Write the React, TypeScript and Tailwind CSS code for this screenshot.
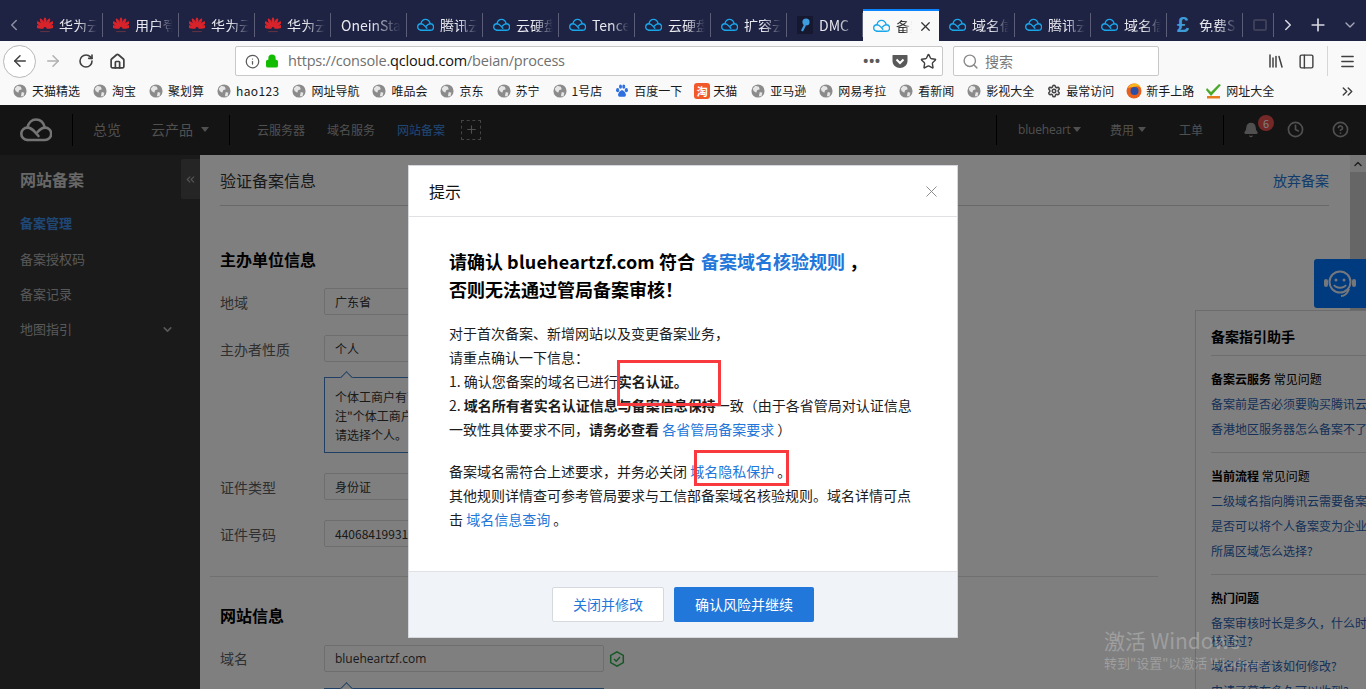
import {
  ArrowLeft, ArrowRight, RotateCw, Home, Info, Lock, Star, Search, Library, PanelLeft, Menu,
  ChevronLeft, ChevronRight, ChevronDown, ChevronUp, ChevronsLeft, ChevronsRight, Plus, X, Bell, Clock, CircleHelp, Settings,
} from "lucide-react";

const font = "font-['Noto_Sans_CJK_SC','Noto_Sans',sans-serif]";

function CloudLogo({ className, color }: { className: string; color: string }) {
  return (
    <svg viewBox="0 0 32 24" className={className} fill="none" stroke={color} strokeWidth="2.6" strokeLinecap="round">
      <path d="M7.5 22H25a6.2 6.2 0 0 0 0-12.4c-3 0-5 1.6-7.4 4.4" />
      <path d="M7.5 22a6.2 6.2 0 0 1 0-12.4c3.4 0 5.4 2 8 5l3 3.4" />
      <path d="M7.5 9.6C8.5 4.5 12 1.5 16 1.5c4.2 0 7.6 3 8.8 8" />
    </svg>
  );
}

function HuaweiLogo() {
  return (
    <svg viewBox="0 0 20 20" className="w-[16px] h-[16px] shrink-0">
      {[-78, -52, -26, 0, 26, 52, 78].map((a) => (
        <ellipse key={a} cx="10" cy="6.5" rx="1.9" ry="6" fill="#d8232a" transform={`rotate(${a} 10 14)`} />
      ))}
      <rect x="4" y="17.5" width="12" height="1.4" fill="#5e3240" />
    </svg>
  );
}

type TabIcon = "huawei" | "cloud" | "dmc" | "pound";

function Tab({ label, icon, active }: { label: string; icon?: TabIcon; active?: boolean }) {
  return (
    <div
      className={`relative w-[76px] h-[32px] shrink-0 flex items-center gap-[6px] pl-[10px] pr-[6px] ${
        active ? "bg-[#f9f9fa] border-t-2 border-[#0a84ff] text-[#333]" : "text-[#e8e8ee]"
      }`}
    >
      {icon === "huawei" && <HuaweiLogo />}
      {icon === "cloud" && <CloudLogo className="w-[17px] h-[14px] shrink-0" color="#19a6ea" />}
      {icon === "dmc" && (
        <div className="w-[16px] h-[18px] shrink-0 bg-[#15182e] flex items-center justify-center">
          <svg viewBox="0 0 12 16" className="w-[12px] h-[16px]" fill="#3d9be0">
            <circle cx="7" cy="5" r="3.6" />
            <path d="M5 7.5l2 1-3 6-2-1z" />
          </svg>
        </div>
      )}
      {icon === "pound" && <span className="w-[16px] shrink-0 text-[22px] leading-none font-bold text-[#3d9bd8] font-['Liberation_Sans']">£</span>}
      <span className="flex-1 overflow-hidden whitespace-nowrap text-[14px] leading-none [mask-image:linear-gradient(to_right,black_50%,transparent_100%)]">
        {label}
      </span>
      {active && <X size={15} strokeWidth={2} className="shrink-0 text-[#333]" />}
      {!active && <span className="absolute right-0 top-[4px] h-[24px] w-px bg-[#5b5e76]" />}
    </div>
  );
}

const tabs: { label: string; icon?: TabIcon; active?: boolean }[] = [
  { label: "华为云", icon: "huawei" },
  { label: "用户登", icon: "huawei" },
  { label: "华为云", icon: "huawei" },
  { label: "华为云", icon: "huawei" },
  { label: "OneinStack" },
  { label: "腾讯云", icon: "cloud" },
  { label: "云硬盘", icon: "cloud" },
  { label: "Tencent", icon: "cloud" },
  { label: "云硬盘", icon: "cloud" },
  { label: "扩容云", icon: "cloud" },
  { label: "DMC", icon: "dmc" },
  { label: "备案", icon: "cloud", active: true },
  { label: "域名信", icon: "cloud" },
  { label: "腾讯云", icon: "cloud" },
  { label: "域名信", icon: "cloud" },
  { label: "免费SSL", icon: "pound" },
];

function Globe() {
  return (
    <svg viewBox="0 0 16 16" className="w-[14px] h-[14px] shrink-0">
      <circle cx="8" cy="8" r="7.5" fill="#8b8b8b" />
      <path d="M5 2l4 1 1 3-3 1-1 3-3-2-1-3zM10 9l3 1-1 4-3 0z" fill="#e6e6e6" />
    </svg>
  );
}

function Bookmark({ label, icon, textClass }: { label: string; icon?: React.ReactNode; textClass?: string }) {
  return (
    <div className="flex items-center gap-[5px] shrink-0">
      {icon ?? <Globe />}
      <span className={`${textClass ?? "text-[12px]"} text-[#1a1a1a] whitespace-nowrap`}>{label}</span>
    </div>
  );
}

function Field({ label, value, mt }: { label: string; value: string; mt: string }) {
  return (
    <div className={`flex items-center h-[27px] ${mt}`}>
      <span className="w-[104px] pt-[1px] text-[14px] text-[#5e5e5e] whitespace-nowrap">{label}</span>
      <div className="w-[280px] h-full bg-white border border-[#dcdcdc] rounded-[2px] pl-[10px] pt-[1px] flex items-center text-[12px] text-[#333]">{value}</div>
    </div>
  );
}

function Arrow() {
  return <span className="absolute left-[17px] -top-[5px] w-[9px] h-[9px] rotate-45 bg-white border-l border-t border-[#3f7fc8]" />;
}

function PanelSection({ title, sub, links, last }: { title: string; sub?: string; links: string[]; last?: boolean }) {
  return (
    <div className={last ? "pt-[14px]" : "pt-[14px] pb-[14px] border-b border-[#dcdcdc]"}>
      <div className="text-[12px] leading-[18px] text-black">
        <b>{title}</b>
        {sub && <span> {sub}</span>}
      </div>
      {links.map((l) => (
        <div key={l} className="mt-[7px] text-[12px] leading-[18px] text-[#2a62b0] whitespace-pre">
          {l}
        </div>
      ))}
    </div>
  );
}

const link = "text-[#2277da]";

export default function App() {
  return (
    <div className={`relative w-[1366px] h-[689px] overflow-hidden flex flex-col bg-white ${font}`}>
      {/* tab strip */}
      <div className="h-[41px] bg-[#1e2243] flex items-end shrink-0">
        <div className="w-[27px] h-[32px] flex items-center justify-center text-[#8d8f9f]">
          <ChevronLeft size={18} />
        </div>
        <div className="flex items-end h-[32px]">
          {tabs.map((t, i) => (
            <Tab key={i} {...t} />
          ))}
        </div>
        <div className="w-[31px] h-[32px] flex items-center pl-[10px] relative">
          <span className="w-[14px] h-[12px] border-2 border-[#3c3f55] rounded-[2px]" />
          <span className="absolute right-0 top-[4px] h-[24px] w-px bg-[#5b5e76]" />
        </div>
        <div className="flex-1 h-[32px] flex items-center text-[#d8d8e0]">
          <ChevronRight size={18} className="ml-[5px]" />
          <Plus size={20} className="ml-[11px]" />
          <ChevronDown size={16} className="ml-[14px] text-[#a8a9b8]" />
        </div>
      </div>

      {/* nav toolbar */}
      <div className="h-[38px] pt-[2px] bg-[#f9f9fa] flex items-center shrink-0 text-[#404040]">
        <div className="ml-[3px] w-[33px] h-[33px] rounded-full bg-white border border-[#b8b8b8] flex items-center justify-center shrink-0">
          <ArrowLeft size={18} />
        </div>
        <ArrowRight size={18} className="ml-[8px] text-[#b0b0b0] shrink-0" />
        <RotateCw size={16} strokeWidth={2.4} className="ml-[16px] shrink-0" />
        <Home size={17} strokeWidth={2.4} className="ml-[15px] shrink-0" />
        <div className="ml-[109px] w-[708px] h-[30px] bg-white border border-[#c8c8c8] rounded-[2px] flex items-center shrink-0">
          <Info size={15} className="ml-[9px] text-[#5a5a5a] shrink-0" />
          <Lock size={14} strokeWidth={2.5} fill="#12bc00" className="ml-[5px] text-[#12bc00] shrink-0" />
          <span className="ml-[9px] text-[14.5px] tracking-[-0.2px] text-[#707070] whitespace-nowrap font-['Open_Sans',sans-serif]">
            https://console.<span className="text-[#111]">qcloud.com</span>/beian/process
          </span>
          <span className="ml-auto text-[#5a5a5a] text-[14px] font-bold tracking-[1px] leading-none font-['Liberation_Sans']">•••</span>
          <svg viewBox="0 0 16 16" className="w-[16px] h-[16px] ml-[11px] shrink-0">
            <path d="M1 2h14a.5.5 0 0 1 .5.5V8c0 4-3.5 7-7.5 7S.5 12 .5 8V2.500A.5.5 0 0 1 1 2z" fill="#595959" />
            <path d="M4.500 6.500L8 10l3.500-3.500" stroke="#fff" strokeWidth="2" fill="none" />
          </svg>
          <Star size={17} strokeWidth={2} className="ml-[12px] mr-[5px] text-[#404040] shrink-0" />
        </div>
        <div className="ml-[10px] w-[206px] h-[30px] bg-white border border-[#c8c8c8] rounded-[2px] flex items-center shrink-0">
          <Search size={17} className="ml-[8px] text-[#8a8a8a]" />
          <span className="ml-[6px] text-[14px] text-[#777]">搜索</span>
        </div>
        <Library size={18} className="ml-[108px] shrink-0" />
        <PanelLeft size={17} className="ml-[13px] shrink-0" />
        <span className="ml-[12px] w-px h-[30px] bg-[#d6d6d6] shrink-0" />
        <Menu size={17} className="ml-[11px] shrink-0" />
      </div>

      {/* bookmarks */}
      <div className="h-[26px] pb-[2px] bg-[#f9f9fa] flex items-center pl-[13px] gap-[13px] shrink-0 relative">
        <Bookmark label="天猫精选" />
        <Bookmark label="淘宝" />
        <Bookmark label="聚划算" />
        <Bookmark label="hao123" textClass="text-[12px] tracking-[0.35px]" />
        <Bookmark label="网址导航" />
        <Bookmark label="唯品会" />
        <Bookmark label="京东" />
        <Bookmark label="苏宁" />
        <Bookmark label="1号店" />
        <Bookmark
          label="百度一下"
          icon={
            <svg viewBox="0 0 16 16" className="w-[14px] h-[14px] shrink-0" fill="#2f6fe0">
              <ellipse cx="3" cy="7" rx="1.800" ry="2.300" />
              <ellipse cx="6.300" cy="3" rx="1.700" ry="2.400" />
              <ellipse cx="10" cy="3" rx="1.700" ry="2.400" />
              <ellipse cx="13" cy="7" rx="1.800" ry="2.300" />
              <path d="M8 7c2 0 4.500 3 4.500 5.500 0 2-2 2.500-4.500 2-2.500.5-4.500 0-4.500-2C3.500 10 6 7 8 7z" />
            </svg>
          }
        />
        <div className="flex items-center gap-[3px] shrink-0 -ml-[1px] mr-[1px]">
          <span className="w-[16px] h-[16px] rounded-[3px] bg-[#f2592a] text-white text-[11px] leading-[16px] text-center font-bold">淘</span>
          <span className="text-[12px] text-[#1a1a1a]">天猫</span>
        </div>
        <Bookmark label="亚马逊" />
        <Bookmark label="网易考拉" />
        <Bookmark label="看新闻" />
        <Bookmark label="影视大全" />
        <Bookmark label="最常访问" icon={<Settings size={14} strokeWidth={2.6} className="text-[#444] shrink-0" />} />
        <div className="flex items-center gap-[4px] shrink-0 -ml-[1px]">
          <svg viewBox="0 0 16 16" className="w-[16px] h-[16px] shrink-0">
            <circle cx="8" cy="8" r="7.500" fill="#e8601c" />
            <circle cx="8.500" cy="8" r="4" fill="#2a4fa8" />
            <path d="M2 5c1-3 4-4.500 7-4.500 3 0 5.500 2 6 5-1-1.500-3-2.500-5-2-2 .5-4 0-8 1.500z" fill="#f8b51c" />
          </svg>
          <span className="text-[12px] text-[#1a1a1a]">新手上路</span>
        </div>
        <div className="flex items-center gap-[4px] shrink-0 -ml-[1px]">
          <svg viewBox="0 0 16 16" className="w-[16px] h-[16px] shrink-0">
            <path d="M1 5l4 4 8-8 2 1L5 13 0 7z" fill="#4aa92c" />
            <rect x="1" y="13" width="13" height="2.500" fill="#e87a1e" />
          </svg>
          <span className="text-[12px] text-[#1a1a1a]">网址大全</span>
        </div>
        <ChevronsRight size={17} className="absolute left-[1339px] text-[#404040]" />
      </div>

      {/* console page, dimmed by the dialog mask */}
      <div className="relative flex-1 flex flex-col overflow-hidden">
        <div className="h-[50px] pb-[1px] bg-[#282828] flex items-center shrink-0 text-[#a0a0a0]">
          <CloudLogo className="ml-[20px] w-[32px] h-[24px]" color="#e8e8e8" />
          <span className="ml-[20px] w-px h-[32px] bg-black" />
          <span className="ml-[20px] text-[14px]">总览</span>
          <span className="ml-[30px] text-[14px]">云产品</span>
          <span className="ml-[8px] border-x-[4px] border-x-transparent border-t-[5px] border-t-[#a0a0a0]" />
          <span className="ml-[20px] w-px h-[30px] bg-black" />
          <span className="ml-[27px] text-[12px]">云服务器</span>
          <span className="ml-[22px] text-[12px]">域名服务</span>
          <span className="ml-[22px] text-[12px] text-[#3f8fe8]">网站备案</span>
          <span className="ml-[16px] w-[20px] h-[20px] border border-dashed border-[#888] flex items-center justify-center">
            <Plus size={13} />
          </span>
          <span className="ml-[515px] w-px h-[30px] bg-black" />
          <span className="ml-[21px] w-[52px] text-[12px] tracking-[-0.2px] whitespace-nowrap font-['Open_Sans']">blueheart</span>
          <span className="ml-[3px] border-x-[4px] border-x-transparent border-t-[5px] border-t-[#a0a0a0]" />
          <span className="ml-[29px] text-[12px]">费用</span>
          <span className="ml-[4px] border-x-[4px] border-x-transparent border-t-[5px] border-t-[#a0a0a0]" />
          <span className="ml-[33px] text-[12px]">工单</span>
          <span className="ml-[20px] w-px h-[30px] bg-black" />
          <div className="relative ml-[19px]">
            <Bell size={16} fill="#a0a0a0" />
            <span className="absolute -top-[7px] left-[15px] w-[16px] h-[16px] rounded-full bg-[#e85050] text-white text-[11px] leading-[16px] text-center">6</span>
          </div>
          <Clock size={17} strokeWidth={2.4} className="ml-[28px]" />
          <CircleHelp size={17} strokeWidth={2.4} className="ml-[28px]" />
        </div>

        <div className="flex-1 flex min-h-0">
          {/* side menu */}
          <div className="w-[200px] bg-[#343434] relative shrink-0 pl-[20px]">
            <div className="pt-[12px] text-[16px] leading-[24px] font-bold text-[#d0d0d0]">网站备案</div>
            <div className="mt-[22px] text-[13px] leading-[20px] font-bold text-[#3f8fe8]">备案管理</div>
            <div className="mt-[16px] text-[13px] leading-[20px] text-[#b0b0b0]">备案授权码</div>
            <div className="mt-[15px] text-[13px] leading-[20px] text-[#b0b0b0]">备案记录</div>
            <div className="mt-[15px] text-[13px] leading-[20px] text-[#b0b0b0] flex items-center justify-between pr-[26px]">
              地图指引
              <ChevronDown size={13} strokeWidth={3} />
            </div>
            <div className="absolute right-0 top-[4px] w-[19px] h-[40px] bg-[#4a4a4a] rounded-l-[2px] flex items-center justify-center text-[#aaa]">
              <ChevronsLeft size={13} />
            </div>
          </div>

          {/* main form */}
          <div className="flex-1 bg-white pl-[20px] pr-[37px] relative">
            <div className="h-[51px] border-b border-[#d0d0d0] flex items-center justify-between">
              <span className="text-[16px] text-[#333]">验证备案信息</span>
              <span className={`text-[14px] ${link}`}>放弃备案</span>
            </div>
            <div className="mt-[43px] text-[16px] leading-[20px] font-bold text-black">主办单位信息</div>
            <Field label="地域" value="广东省" mt="mt-[19px]" />
            <Field label="主办者性质" value="个人" mt="mt-[20px]" />
            <div className="relative mt-[15px] ml-[104px] w-[280px] h-[76px] border border-[#3f7fc8] bg-white pl-[10px] pt-[9px] text-[12px] leading-[19px] text-[#333] whitespace-nowrap">
              <Arrow />
              个体工商户有营业执照
              <br />注"个体工商户"
              <br />请选择个人。
            </div>
            <Field label="证件类型" value="身份证" mt="mt-[20px]" />
            <Field label="证件号码" value="44068419931" mt="mt-[20px]" />
            <div className="mt-[29px] -ml-[10px] w-[948px] border-t border-[#e0e0e0]" />
            <div className="mt-[28px] text-[16px] leading-[20px] font-bold text-black">网站信息</div>
            <div className="flex items-center h-[27px] mt-[20px]">
              <span className="w-[104px] text-[14px] text-[#5e5e5e]">域名</span>
              <div className="w-[280px] h-full bg-white border border-[#dcdcdc] rounded-[2px] pl-[10px] flex items-center text-[12px] text-[#333] font-['Open_Sans']">blueheartzf.com</div>
              <svg viewBox="0 0 16 16" className="ml-[5px] w-[16px] h-[16px]" fill="none" stroke="#2fae4e" strokeWidth="1.500">
                <path d="M8 .8l6.300 3.600v7.200L8 15.200 1.700 11.600V4.400z" />
                <path d="M5 8l2.200 2.200L11 6" />
              </svg>
            </div>
            <div className="relative mt-[16px] ml-[104px] w-[280px] h-[40px] border border-[#3f7fc8] bg-white">
              <Arrow />
            </div>
            {/* scrollbar */}
            <div className="absolute right-0 top-0 w-[16px] h-full bg-[#f0f0f0] flex flex-col">
              <div className="h-[17px] flex items-center justify-center text-[#444]">
                <ChevronUp size={12} strokeWidth={3} />
              </div>
              <div className="h-[150px] bg-[#cdcdcd]" />
            </div>
          </div>
        </div>

        {/* assistant button and guide panel */}
        <div className="absolute right-0 top-[154px] w-[52px] h-[49px] bg-[#0074ff] rounded-l-[3px] flex items-center justify-center">
          <svg viewBox="0 0 34 30" className="w-[34px] h-[30px]" fill="none" stroke="#e8eef8" strokeWidth="2">
            <circle cx="17" cy="13" r="10.500" />
            <rect x="1" y="10" width="4" height="8" rx="2" fill="#e8eef8" stroke="none" />
            <rect x="29" y="10" width="4" height="8" rx="2" fill="#e8eef8" stroke="none" />
            <circle cx="13" cy="11" r="1.500" fill="#e8eef8" stroke="none" />
            <circle cx="21" cy="11" r="1.500" fill="#e8eef8" stroke="none" />
            <path d="M11 16c2 3.500 10 3.500 12 0M26 20c-1.500 4-4 7-8 7" />
          </svg>
        </div>
        <div className="absolute left-[1195px] top-[205px] w-[240px] h-[400px] bg-white border border-[#d8d8d8] pl-[15px] pr-[24px]">
          <div className="h-[45px] pt-[15px] text-[14px] leading-[20px] font-bold text-black border-b border-[#dcdcdc]">备案指引助手</div>
          <PanelSection title="备案云服务" sub="常见问题" links={["备案前是否必须要购买腾讯云服务器?", "香港地区服务器怎么备案不了?"]} />
          <PanelSection title="当前流程" sub="常见问题" links={["二级域名指向腾讯云需要备案吗?", "是否可以将个人备案变为企业备案?", "所属区域怎么选择?"]} />
          <PanelSection title="热门问题" last links={["备案审核时长是多久，什么时候审\n核通过?", "域名所有者该如何修改?", "申请了幕布多久可以收到?"]} />
        </div>

        <div className="absolute inset-0 bg-black/50" />

        {/* windows watermark */}
        <div className="absolute left-[1104px] top-[522px] z-10 text-white/25 whitespace-nowrap">
          <div className="text-[21px] leading-[26px]">激活 Windows</div>
          <div className="text-[13px] leading-[20px]">转到"设置"以激活 Windows。</div>
        </div>
      </div>

      {/* dialog */}
      <div className="absolute left-[408px] top-[165px] w-[550px] h-[473px] bg-white border border-[#d5d8dc] flex flex-col">
        <div className="h-[51px] border-b border-[#dfe1e4] flex items-center justify-between pl-[20px] pr-[16px] shrink-0">
          <span className="text-[16px] text-[#111]">提示</span>
          <X size={19} strokeWidth={1.2} className="text-[#888]" />
        </div>
        <div className="flex-1 pl-[40px] pt-[30px] text-[#1c1c1c] whitespace-nowrap">
          <div className="text-[18px] leading-[28px] font-bold text-black">
            请确认 <span className="tracking-[0.2px]">blueheartzf.com</span> 符合 <span className={`ml-[2px] ${link}`}>备案域名核验规则</span> ，
            <br />否则无法通过管局备案审核！
          </div>
          <div className="mt-[18px] text-[14px] leading-[24px]">
            <div>对于首次备案、新增网站以及变更备案业务，</div>
            <div>请重点确认一下信息：</div>
            <div>
              1. 确认您备案的域名已进行<b>实名认证。</b>
            </div>
            <div>
              2. <b>域名所有者实名认证信息与备案信息保持</b>一致（由于各省管局对认证信息
            </div>
            <div>
              一致性具体要求不同，<b>请务必查看</b> <span className={link}>各省管局备案要求</span> ）
            </div>
            <div className="mt-[18px]">
              备案域名需符合上述要求，并务必关闭 <span className={link}>域名隐私保护</span> 。
            </div>
            <div>其他规则详情查可参考管局要求与工信部备案域名核验规则。域名详情可点</div>
            <div>
              击 <span className={link}>域名信息查询</span> 。
            </div>
          </div>
        </div>
        <div className="h-[66px] bg-[#f0f3f7] border-t border-[#dfe1e4] flex items-center justify-center gap-[10px] shrink-0">
          <div className={`w-[112px] h-[35px] bg-white border border-[#d5d8dc] rounded-[2px] flex items-center justify-center text-[14px] ${link}`}>关闭并修改</div>
          <div className="w-[140px] h-[35px] bg-[#2277da] rounded-[2px] flex items-center justify-center text-[14px] text-white">确认风险并继续</div>
        </div>
      </div>

      {/* red annotation boxes */}
      <div className="absolute left-[617px] top-[360px] w-[104px] h-[46px] border-[3px] border-[#f83a3f]" />
      <div className="absolute left-[694px] top-[450px] w-[95px] h-[36px] border-[3px] border-[#f83a3f]" />
    </div>
  );
}
